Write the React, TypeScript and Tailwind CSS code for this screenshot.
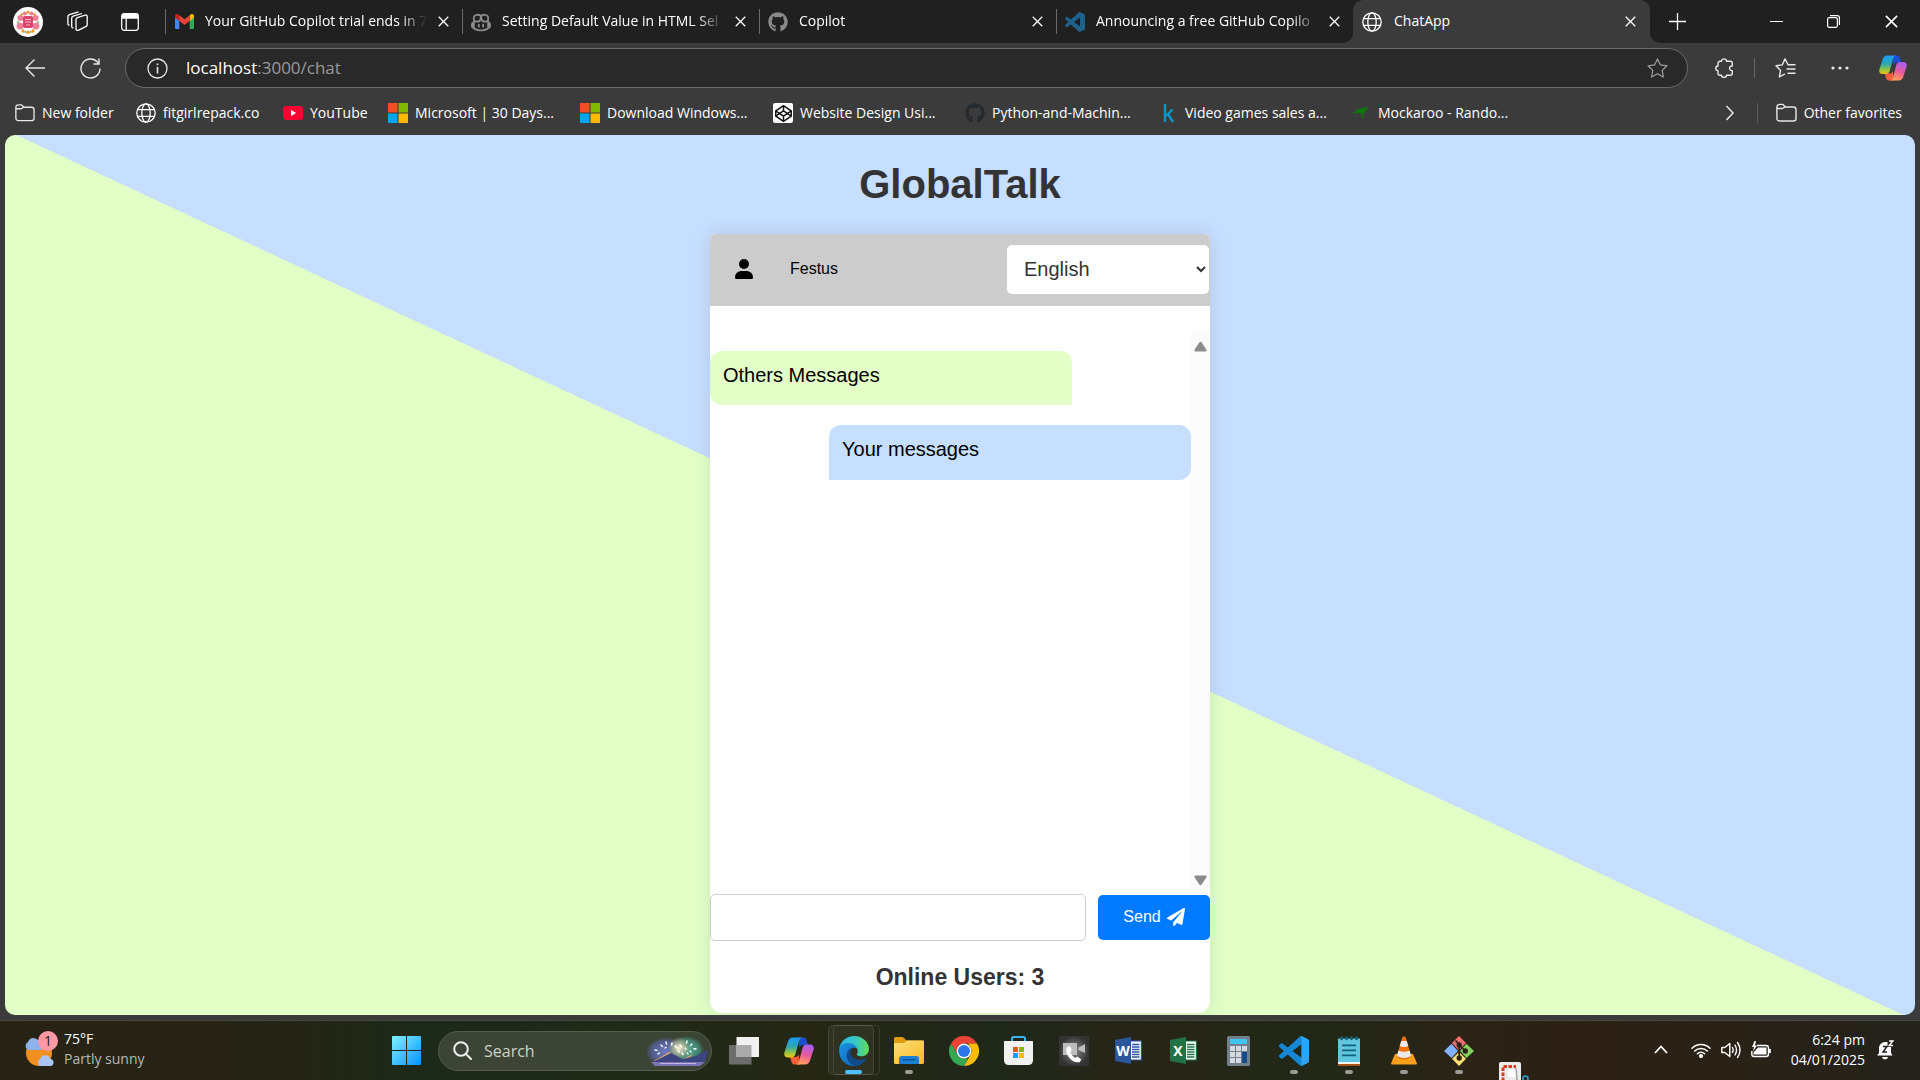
import type { ReactNode } from "react";
import { FaCodepen, FaGithub, FaPaperPlane } from "react-icons/fa";
import { VscCopilot } from "react-icons/vsc";

const VSCODE =
  "M23.15 2.587L18.21.21a1.494 1.494 0 0 0-1.705.29l-9.46 8.63-4.12-3.128a.999.999 0 0 0-1.276.057L.327 7.261A1 1 0 0 0 .326 8.74L3.899 12 .326 15.26a1 1 0 0 0 .001 1.479L1.65 17.94a.999.999 0 0 0 1.276.057l4.12-3.128 9.46 8.63a1.492 1.492 0 0 0 1.704.29l4.942-2.377A1.5 1.5 0 0 0 24 20.06V3.939a1.5 1.5 0 0 0-.85-1.352zm-5.146 14.861L10.826 12l7.178-5.448v10.896z";

/* ---------- shared icons ---------- */

const Globe = () => (
  <svg width="20" height="20" viewBox="0 0 20 20" fill="none" stroke="#fff" strokeWidth="1.3">
    <circle cx="10" cy="10" r="9.2" />
    <ellipse cx="10" cy="10" rx="4.2" ry="9.2" />
    <path d="M1.5 6.7h17M1.5 13.3h17" />
  </svg>
);

const Folder = () => (
  <svg width="21" height="20" viewBox="0 0 21 20" fill="none" stroke="#e8e8e8" strokeWidth="1.4">
    <path d="M.9 4A2.6 2.6 0 0 1 3.500 1.400h3.300l2.600 2.600h8a2.600 2.600 0 0 1 2.600 2.600v8.800a2.600 2.600 0 0 1-2.600 2.600H3.500A2.600 2.600 0 0 1 .9 15.400zM.9 5.500h5.200c.6 0 .9-.2 1.300-.5L9 4" />
  </svg>
);

const MsLogo = () => (
  <svg width="20" height="20" viewBox="0 0 20 20">
    <path fill="#f25022" d="M0 0h9.500v9.500H0z" />
    <path fill="#7fba00" d="M10.500 0H20v9.500h-9.500z" />
    <path fill="#00a4ef" d="M0 10.500h9.500V20H0z" />
    <path fill="#ffb900" d="M10.500 10.500H20V20h-9.500z" />
  </svg>
);

const Cross = ({ size = 11 }: { size?: number }) => (
  <svg width={size} height={size} viewBox="0 0 12 12" fill="none" stroke="#fff" strokeWidth="1.4">
    <path d="M.8.8l10.400 10.400M11.200.8L.8 11.200" />
  </svg>
);

const Copilot = ({ size, id }: { size: number; id: string }) => (
  <svg width={size} height={size} viewBox="0 0 30 30">
    <defs>
      <linearGradient id={`${id}a`} x1="0" y1="0" x2="0" y2="1">
        <stop offset="0" stopColor="#1a9df5" />
        <stop offset=".45" stopColor="#2aa6b8" />
        <stop offset=".75" stopColor="#8fc544" />
        <stop offset="1" stopColor="#f5c21b" />
      </linearGradient>
      <linearGradient id={`${id}b`} x1=".6" y1="0" x2=".3" y2="1">
        <stop offset="0" stopColor="#a95cf0" />
        <stop offset=".5" stopColor="#ec5a9c" />
        <stop offset="1" stopColor="#ffa552" />
      </linearGradient>
    </defs>
    <path fill="#1b4fd0" d="M14 1.500h5.500c2 0 2.700 1.500 3.200 3.200L23.800 9h-5c-2 0-3 1-3.500 3z" />
    <path fill="#f4603c" d="M16 28.500h-5.500c-2 0-2.700-1.500-3.200-3.200L6.200 21h5c2 0 3-1 3.500-3z" />
    <path fill={`url(#${id}a)`} d="M9 1.500h9c-2 .5-2.600 2-3.200 4L11.500 18c-.7 2.300-1.800 3.500-4 3.500H4C1 21.500-.3 19.300.4 16.500L4 5.500c.9-2.700 2.300-4 5-4z" />
    <path fill={`url(#${id}b)`} d="M21 28.500h-9c2-.5 2.600-2 3.200-4L18.500 12c.7-2.300 1.800-3.500 4-3.500H26c3 0 4.300 2.200 3.600 5L26 24.500c-.9 2.700-2.300 4-5 4z" />
  </svg>
);

/* ---------- browser: tabs ---------- */

const Gmail = () => (
  <svg width="19" height="15" viewBox="0 0 19 15">
    <path fill="#4285f4" d="M0 2.500l4.300 3.200V15H1.300A1.300 1.300 0 0 1 0 13.700z" />
    <path fill="#34a853" d="M19 2.500l-4.300 3.200V15h3a1.300 1.300 0 0 0 1.300-1.300z" />
    <path fill="#fbbc04" d="M14.700 1.200l1-.7C17.200-.6 19 .4 19 2v1.800l-4.300 3.300z" />
    <path fill="#c5221f" d="M4.300 1.200l-1-.7C1.800-.6 0 .4 0 2v1.800l4.300 3.300z" />
    <path fill="#ea4335" d="M4.300 1.200l5.200 4 5.200-4v5.900L9.500 11 4.300 7.100z" />
  </svg>
);

const tabs: { title: string; icon: ReactNode; active?: boolean }[] = [
  { title: "Your GitHub Copilot trial ends in 7", icon: <Gmail /> },
  { title: "Setting Default Value in HTML Sel", icon: <VscCopilot size={20} color="#8a8a8a" /> },
  { title: "Copilot", icon: <FaGithub size={20} color="#8a8a8a" /> },
  {
    title: "Announcing a free GitHub Copilo",
    icon: (
      <svg width="20" height="20" viewBox="0 0 24 24" fill="#1f618d">
        <path d={VSCODE} />
      </svg>
    ),
  },
  { title: "ChatApp", icon: <Globe />, active: true },
];

function TabStrip() {
  return (
    <div className="flex h-[43px] shrink-0 bg-[#202020]">
      <div className="flex w-[165px] shrink-0 items-center">
        <button aria-label="Profile" className="ml-[13px]">
          <svg width="30" height="30" viewBox="0 0 30 30">
            <circle cx="15" cy="15" r="15" fill="#fff" />
            <g fill="#ec7f98">
              <circle cx="7.500" cy="11" r="3" />
              <circle cx="22.500" cy="11" r="3" />
              <circle cx="7" cy="19" r="3.500" />
              <circle cx="23" cy="19" r="3.500" />
              <circle cx="12" cy="6.500" r="2" />
              <circle cx="18.500" cy="6.500" r="2" />
            </g>
            <g fill="#ef9a35">
              <circle cx="15" cy="5.200" r="1.600" />
              <circle cx="9" cy="7.300" r="1.300" />
              <circle cx="21.500" cy="7.300" r="1.300" />
              <circle cx="10" cy="24" r="1.700" />
              <circle cx="20" cy="24" r="1.700" />
              <circle cx="15" cy="25.300" r="1.700" />
            </g>
            <g fill="#7fae52">
              <circle cx="12.500" cy="25" r="1" />
              <circle cx="17.500" cy="25" r="1" />
              <circle cx="5" cy="15" r="1" />
              <circle cx="25" cy="15" r="1" />
            </g>
            <rect x="10" y="9" width="10" height="12" rx="2" fill="#d8436b" />
            <path d="M12 12.500h6M12 15h6M13 18h4" stroke="#f7b4c2" />
          </svg>
        </button>
        <button aria-label="Workspaces" className="ml-[24px]">
          <svg width="21" height="21" viewBox="0 0 21 21" fill="none" stroke="#fff" strokeWidth="1.300" strokeLinejoin="round">
            <path d="M9 8.500c0-1 .6-1.600 1.500-1.900l7.500-2.400c1.300-.4 2.200.3 2.200 1.500v8c0 1-.6 1.700-1.500 2l-7.500 3.600c-1.300.5-2.200-.2-2.200-1.400z" />
            <path d="M6.300 17c-1 0-1.600-.6-1.600-1.600V7.200c0-1 .6-1.700 1.500-2l8.600-2.700M2.600 14.200C1.500 14.200.9 13.500.9 12.500V5.700c0-1 .6-1.700 1.500-2L11.500.8" />
          </svg>
        </button>
        <button aria-label="Tab actions" className="ml-[33px]">
          <svg width="18" height="18" viewBox="0 0 18 18" fill="none" stroke="#fff" strokeWidth="1.300">
            <rect x=".7" y=".7" width="16.600" height="16.600" rx="2.500" />
            <path d="M1.500 1.500h15v3.500h-15z" fill="#fff" />
            <path d="M5.200 5v12" />
          </svg>
        </button>
      </div>
      <div className="flex min-w-0 flex-1" role="tablist">
        {tabs.map((t) => (
          <div
            key={t.title}
            className={
              t.active
                ? "relative flex max-w-[297px] flex-1 items-center rounded-t-[10px] bg-[#3b3b3b] pl-[9px] pr-[14px]"
                : "flex max-w-[297px] min-w-0 flex-1 items-center pr-[13px]"
            }
          >
            {t.active ? (
              <>
                <svg className="absolute bottom-0 -left-[10px]" width="10" height="10" viewBox="0 0 10 10">
                  <path d="M10 0v10H0A10 10 0 0 0 10 0z" fill="#3b3b3b" />
                </svg>
                <svg className="absolute -right-[10px] bottom-0" width="10" height="10" viewBox="0 0 10 10">
                  <path d="M0 0v10h10A10 10 0 0 1 0 0z" fill="#3b3b3b" />
                </svg>
              </>
            ) : (
              <span className="mr-2 h-[25px] w-px bg-[#6b6b6b]" />
            )}
            <span className="flex w-5 shrink-0 justify-center">{t.icon}</span>
            <button
              role="tab"
              aria-selected={!!t.active}
              className={
                t.active
                  ? "ml-3 min-w-0 flex-1 overflow-hidden pb-[2px] text-left whitespace-nowrap"
                  : "ml-[11px] min-w-0 flex-1 overflow-hidden mask-r-from-88% pb-[2px] text-left whitespace-nowrap"
              }
            >
              {t.title}
            </button>
            <button aria-label={`Close ${t.title}`} className="ml-[11px]">
              <Cross />
            </button>
          </div>
        ))}
        <button aria-label="New tab" className="ml-[19px]">
          <svg width="17" height="17" viewBox="0 0 17 17" stroke="#fff" strokeWidth="1.300">
            <path d="M8.500 0v17M0 8.500h17" />
          </svg>
        </button>
      </div>
      <div className="flex shrink-0">
        <button aria-label="Minimize" className="flex w-[57px] items-center justify-center">
          <span className="h-px w-[13px] bg-white" />
        </button>
        <button aria-label="Restore" className="flex w-[57px] items-center justify-center">
          <svg width="13" height="13" viewBox="0 0 13 13" fill="none" stroke="#fff" strokeWidth="1.200">
            <rect x=".6" y="2.600" width="9.800" height="9.800" rx="1.800" />
            <path d="M3 .6h7.400a2 2 0 0 1 2 2V10" />
          </svg>
        </button>
        <button aria-label="Close window" className="flex w-[58px] items-center justify-center">
          <Cross size={13} />
        </button>
      </div>
    </div>
  );
}

/* ---------- browser: address bar ---------- */

function AddressBar() {
  return (
    <div className="flex h-[50px] shrink-0 items-center pr-[13px]">
      <button aria-label="Back" className="ml-[25px]">
        <svg width="20" height="18" viewBox="0 0 20 18" fill="none" stroke="#e8e8e8" strokeWidth="1.400">
          <path d="M9.500.5L1 9l8.500 8.500M1 9h19" />
        </svg>
      </button>
      <button aria-label="Refresh" className="ml-[35px]">
        <svg width="21" height="21" viewBox="0 0 21 21" fill="none" stroke="#e8e8e8" strokeWidth="1.400">
          <path d="M20 10.500a9.500 9.500 0 1 1-2.500-6.400l1.200 1.400M19 .5v5.500h-5.500" />
        </svg>
      </button>
      <div className="ml-[24px] flex h-10 flex-1 items-center rounded-full border border-[#6a6a6a] bg-[#292929] pr-[19px] pl-[21px]">
        <button aria-label="Site information">
          <svg width="21" height="21" viewBox="0 0 21 21" fill="none" stroke="#e8e8e8" strokeWidth="1.300">
            <circle cx="10.500" cy="10.500" r="9.500" />
            <path d="M10.500 9v6.500M10.500 5.600v1.600" strokeWidth="1.600" />
          </svg>
        </button>
        <a href="#chat" className="ml-[18px] flex-1 text-[17px] text-[#9a9a9a]">
          <span className="text-white">localhost</span>:3000/chat
        </a>
        <button aria-label="Add to favorites">
          <svg width="21" height="20" viewBox="0 0 21 20" fill="none" stroke="#a0a0a0" strokeWidth="1.200" strokeLinejoin="round">
            <path d="M10.500.9l2.900 6 6.600.9-4.800 4.600 1.200 6.600-5.900-3.200L4.600 19l1.200-6.600L1 7.800l6.600-.9z" />
          </svg>
        </button>
      </div>
      <button aria-label="Extensions" className="ml-[27px]">
        <svg width="19" height="20" viewBox="0 0 19 20" fill="none" stroke="#e8e8e8" strokeWidth="1.400" strokeLinejoin="round">
          <path d="M6.500 3.300c0-3.300 5-3.300 5 0h3.800a2 2 0 0 1 2 2V8c-3.600-.4-3.600 5 0 4.600v2.700a2 2 0 0 1-2 2h-3.800c0 2.900-5 2.900-5 0H5a2 2 0 0 1-2-2v-2.700c-3-.1-3-4.500 0-4.600V5.300a2 2 0 0 1 2-2z" />
        </svg>
      </button>
      <span className="ml-[20px] h-5 w-px bg-[#666]" />
      <button aria-label="Favorites" className="ml-[20px]">
        <svg width="21" height="20" viewBox="0 0 21 20" fill="none" stroke="#e8e8e8" strokeWidth="1.400" strokeLinejoin="round" strokeLinecap="round">
          <path d="M13 6.500L10 .9l-2.700 6L1 7.800l4.600 4.600L4.400 19l5-2.800M13 6.800h7M12 11h8M13 15.200h7" />
        </svg>
      </button>
      <button aria-label="Settings and more" className="ml-[35px]">
        <svg width="18" height="4" viewBox="0 0 18 4" fill="#e8e8e8">
          <circle cx="2" cy="2" r="1.600" />
          <circle cx="9" cy="2" r="1.600" />
          <circle cx="16" cy="2" r="1.600" />
        </svg>
      </button>
      <button aria-label="Copilot" className="ml-[30px]">
        <Copilot size={28} id="bar" />
      </button>
    </div>
  );
}

/* ---------- browser: bookmarks ---------- */

const bookmarks: { label: string; width: string; icon: ReactNode }[] = [
  { label: "New folder", width: "w-[121px]", icon: <Folder /> },
  { label: "fitgirlrepack.co", width: "w-[147px]", icon: <Globe /> },
  {
    label: "YouTube",
    width: "w-[105px]",
    icon: (
      <svg width="20" height="14" viewBox="0 0 20 14">
        <rect width="20" height="14" rx="3.500" fill="#ff0033" />
        <path d="M8 4l5.200 3L8 10z" fill="#fff" />
      </svg>
    ),
  },
  { label: "Microsoft | 30 Days...", width: "w-[192px]", icon: <MsLogo /> },
  { label: "Download Windows...", width: "w-[193px]", icon: <MsLogo /> },
  {
    label: "Website Design Usi...",
    width: "w-[192px]",
    icon: (
      <span className="flex size-5 items-center justify-center rounded-[2px] bg-white">
        <FaCodepen size={17} color="#111" />
      </span>
    ),
  },
  { label: "Python-and-Machin...", width: "w-[193px]", icon: <FaGithub size={20} color="#24292e" /> },
  {
    label: "Video games sales a...",
    width: "w-[193px]",
    icon: (
      <svg width="20" height="20" viewBox="0 0 20 20" fill="none" stroke="#0d96c4" strokeWidth="2.400">
        <path d="M7 1v18M14.500 6.500L8 13M10 11l5 8" />
      </svg>
    ),
  },
  {
    label: "Mockaroo - Rando...",
    width: "w-[192px]",
    icon: (
      <svg width="20" height="14" viewBox="0 0 20 14" fill="#087a08">
        <path d="M1 6.500C4 7 5 4 8.500 2.700c2.200-.7 3.600-.4 5-.9L15 .6l.8.700 1.700 1-.3 1-2 .2c-.5 1.400-1 2.200-1.800 2.800l.6 1.700-1.200-.9-.8.200-.4 2 1.800 2.600h-1.800L10.300 9l.2-1.500c-1.500 0-2-.4-3-.9C5.500 7.700 3 7.800 1 6.500z" />
      </svg>
    ),
  },
];

function BookmarksBar() {
  return (
    <nav className="flex h-[42px] shrink-0 items-center pr-[18px] pb-[2px] pl-[15px]">
      {bookmarks.map((b) => (
        <a key={b.label} href="#bookmark" className={`flex items-center gap-[7px] whitespace-nowrap ${b.width}`}>
          <span className="flex w-[20px] shrink-0 justify-center">{b.icon}</span>
          {b.label}
        </a>
      ))}
      <button aria-label="More bookmarks" className="ml-auto">
        <svg width="10" height="16" viewBox="0 0 10 16" fill="none" stroke="#e8e8e8" strokeWidth="1.500">
          <path d="M1.500 1l6.500 7-6.500 7" />
        </svg>
      </button>
      <span className="ml-[22px] h-5 w-px bg-[#5c5c5c]" />
      <a href="#other" className="ml-[18px] flex items-center gap-[7px] whitespace-nowrap">
        <Folder />
        Other favorites
      </a>
    </nav>
  );
}

/* ---------- page: chat ---------- */

function ChatPage() {
  return (
    <main className="mx-[5px] flex min-h-0 flex-1 flex-col items-center overflow-hidden rounded-[10px] bg-[linear-gradient(25deg,#e1ffc7_50%,#c6deff_50%)] pb-[2px] font-['Liberation_Sans',Arial,sans-serif] text-black">
      <h1 className="my-[26px] text-[40px] leading-[47px] font-bold text-[#333]">GlobalTalk</h1>
      <section className="flex min-h-0 w-[500px] flex-1 flex-col overflow-hidden rounded-t-[6px] rounded-b-[12px] bg-white shadow-[0_0_20px_rgba(0,0,0,0.1)]">
        <header className="flex h-[72px] shrink-0 items-center bg-[#ccc] pr-px pb-[2px]">
          <svg className="ml-[25px]" width="18" height="20" viewBox="0 0 18 20">
            <circle cx="9" cy="5" r="5" />
            <path d="M0 18.500C0 14 3.500 12 7 12h4c3.500 0 7 2 7 6.500q0 1.500-1.500 1.500h-15Q0 20 0 18.500z" />
          </svg>
          <span className="ml-[37px] text-base">Festus</span>
          <select
            aria-label="Language"
            defaultValue="English"
            className="ml-auto h-[49px] w-[202px] rounded-[5px] bg-white px-[13px] text-xl text-[#333]"
          >
            <option>English</option>
            <option>French</option>
            <option>Spanish</option>
          </select>
        </header>
        <div className="mt-[25px] flex min-h-0 flex-1">
          <div className="flex flex-1 flex-col gap-5 pt-5 text-xl">
            <p className="h-[54px] w-[362px] rounded-[12px] rounded-br-none bg-[#e1ffc7] px-[13px] pt-[10px]">Others Messages</p>
            <p className="h-[55px] w-[362px] self-end rounded-[12px] rounded-bl-none bg-[#c6deff] px-[13px] pt-[10px]">
              Your messages
            </p>
          </div>
          <div className="flex w-[19px] flex-col items-center justify-between bg-[#fbfbfb] pt-[10px] pb-[8px]">
            <svg width="13" height="11" viewBox="0 0 13 11" fill="#8b8b8b">
              <path d="M5.300 1.500q1.200-1.500 2.400 0l4.600 7q.8 2-1 2H1.700q-1.800 0-1-2z" />
            </svg>
            <svg width="13" height="11" viewBox="0 0 13 11" fill="#8b8b8b">
              <path d="M5.300 9.500q1.200 1.500 2.400 0l4.600-7q.8-2-1-2H1.700q-1.800 0-1 2z" />
            </svg>
          </div>
        </div>
        <form className="flex shrink-0 items-center gap-3" onSubmit={(e) => e.preventDefault()}>
          <input
            aria-label="Message"
            className="h-[47px] min-w-0 flex-1 rounded-[5px] border border-[#ccc] bg-white px-[10px] text-base outline-none"
          />
          <button className="flex h-[45px] w-[112px] items-center justify-center gap-[6px] rounded-[5px] bg-[#007bff] pb-[2px] text-base text-white">
            Send
            <FaPaperPlane size={18} />
          </button>
        </form>
        <h2 className="mt-[23px] mb-[22px] shrink-0 text-center text-[23px] leading-[27px] font-bold text-[#333]">Online Users: 3</h2>
      </section>
    </main>
  );
}

/* ---------- taskbar ---------- */

const Edge = () => (
  <svg width="30" height="30" viewBox="0 0 30 30">
    <defs>
      <linearGradient id="eg1" x1="0" y1=".5" x2="1" y2=".5">
        <stop offset="0" stopColor="#2bb5ec" />
        <stop offset=".55" stopColor="#35c9c4" />
        <stop offset="1" stopColor="#62dd55" />
      </linearGradient>
      <linearGradient id="eg2" x1="0" y1="0" x2="1" y2="1">
        <stop offset="0" stopColor="#1c93e0" />
        <stop offset="1" stopColor="#0c5cb4" />
      </linearGradient>
    </defs>
    <path fill="url(#eg2)" d="M.2 13.500C1 9 5 6.500 9.500 6.500c5.500 0 9 3 9 6.500-3-2.500-8-1-8 4 0 5.500 6 8.500 12 7.500l4.500-1.500C24.500 27.300 20 30 15 30 6.500 30-.6 22.500.2 13.500z" />
    <path fill="#114a8b" d="M11.500 12.500c-3.500 2-4.500 6-3.500 9.500 1.200 4.500 5 7.500 9.500 7.800 4-.6 7.500-3 9.700-6.500.3-.6-.2-1-.8-.7-5.500 2.700-14.500 1.200-14.900-6.100 0-1.500.6-3 1.500-4z" />
    <path fill="url(#eg1)" d="M.2 13.500C1 5.500 7.500 0 15 0c9 0 15 6.500 15 13 0 4.500-3.500 7.300-7.500 7.300-3 0-4.700-1-4.700-1.900 0-.6.9-1.200.9-3.100 0-4.300-4-8.300-9.500-8.300C4.500 7 1.200 9.700.2 13.500z" />
  </svg>
);

const Explorer = () => (
  <svg width="30" height="27" viewBox="0 0 30 27">
    <defs>
      <linearGradient id="fe" x1="0" y1="0" x2="1" y2="1">
        <stop offset="0" stopColor="#ffe07a" />
        <stop offset="1" stopColor="#f7b924" />
      </linearGradient>
    </defs>
    <path fill="#e09a10" d="M0 1.500Q0 0 1.500 0H8q1 0 2 1l2.500 2.500H30V10H0z" />
    <path fill="url(#fe)" d="M0 6h10l3-2.500h15.500Q30 3.500 30 5v20.500q0 1.500-1.500 1.500h-27Q0 27 0 25.500z" />
    <path fill="#1a7fd6" d="M5 27v-5q0-3 3-3h14q3 0 3 3v5z" />
    <path stroke="#0b4d94" strokeWidth="1.300" d="M8.500 22.700h13" />
  </svg>
);

const Chrome = () => (
  <svg width="30" height="30" viewBox="0 0 30 30">
    <path fill="#ea4335" d="M2 7.500a15 15 0 0 1 26 0H15a7.500 7.500 0 0 0-6.500 3.750L8.500 18.750z" />
    <path fill="#fbbc05" d="M28 7.500A15 15 0 0 1 15 30l6.500-11.250a7.500 7.500 0 0 0 0-7.500L19 7.500z" />
    <path fill="#34a853" d="M15 30A15 15 0 0 1 2 7.500l6.500 11.250A7.500 7.500 0 0 0 15 22.500l4.300-.1z" />
    <circle cx="15" cy="15" r="7.400" fill="#fff" />
    <circle cx="15" cy="15" r="6" fill="#2f77e8" />
  </svg>
);

const Store = () => (
  <svg width="29" height="29" viewBox="0 0 29 29">
    <path d="M8 6V2.500Q8 1 9.500 1h10Q21 1 21 2.500V6" fill="none" stroke="#35b5ee" strokeWidth="2" />
    <path fill="#f1f1f1" d="M0 5.500Q0 5 .5 5h28q.5 0 .5.500V24q0 5-5 5H5q-5 0-5-5z" />
    <path fill="#f25022" d="M9 11h5v5H9z" />
    <path fill="#7fba00" d="M15 11h5v5h-5z" />
    <path fill="#00a4ef" d="M9 17h5v5H9z" />
    <path fill="#ffb900" d="M15 17h5v5h-5z" />
  </svg>
);

const PhoneLink = () => (
  <svg width="30" height="30" viewBox="0 0 30 30">
    <defs>
      <radialGradient id="ph">
        <stop offset="0" stopColor="#8a8a8a" />
        <stop offset="1" stopColor="#333" />
      </radialGradient>
    </defs>
    <path fill="url(#ph)" d="M0 0h30v30H0z" />
    <path fill="#bdbdbd" d="M4 7h14v12H4zM19.500 11.500L26 8v9l-6.500-3z" />
    <path fill="#fff" d="M7.500 11.500l3-1.500 2.500 4-1.700 1.800c.8 2.700 2.400 4.700 5 6.200l2-1.500 4 3-1.800 2.700C14 27.500 6 20 7.500 11.500z" />
  </svg>
);

const Office = ({ letter, front, lines }: { letter: string; front: string; lines: string }) => (
  <span className="relative block h-[27px] w-[27px]">
    <svg width="27" height="27" viewBox="0 0 27 27">
      <path fill="#fff" stroke={front} strokeWidth="1.200" d="M14 4h12.400v19H14z" />
      <path stroke={lines} strokeWidth="1.300" d="M17 7.500h7.500M17 10h7.500M17 12.500h7.500M17 15h7.500M17 17.500h7.500M17 20h7.500" />
      <path fill={front} d="M0 3l16-3v27L0 24z" />
    </svg>
    <span className="absolute inset-y-0 left-0 flex w-4 items-center justify-center text-sm font-bold text-white">{letter}</span>
  </span>
);

const Calculator = () => (
  <svg width="23" height="30" viewBox="0 0 23 30">
    <rect width="23" height="30" rx="1.500" fill="#73808c" />
    <path fill="#3ec5f2" d="M3 3h17v5H3z" />
    <path fill="#d3dae0" d="M3 10h5v5H3zM9 10h5v5H9zM15 10h5v5h-5zM3 16h5v5H3zM9 16h5v5H9zM3 22h5v5H3zM9 22h5v5H9z" />
    <path fill="#174a8c" d="M15 16h5v11h-5z" />
  </svg>
);

const VsCode = () => (
  <svg width="30" height="30" viewBox="0 0 24 24">
    <path d={VSCODE} fill="#1587d4" />
    <path fill="#2fa4f2" d="M18 0l5.150 2.587A1.500 1.500 0 0 1 24 3.940v16.120a1.500 1.500 0 0 1-.85 1.352L18 23.900z" />
  </svg>
);

const Notepad = () => (
  <svg width="22" height="30" viewBox="0 0 22 30">
    <path fill="#5fc6e0" d="M0 2.500h22V26H0z" />
    <path fill="#f4f4f4" d="M0 26h22v2H0z" />
    <path fill="#a8531c" d="M0 28h22v2H0z" />
    <path stroke="#13617c" strokeWidth="2.600" strokeLinecap="round" d="M3.500 1.500v1.500M8.500 1.500v1.500M13.500 1.500v1.500M18.500 1.500v1.500" />
    <path stroke="#13617c" strokeWidth="1.800" d="M4 9.300h14M4 14.300h14M4 19.300h14" />
  </svg>
);

const Vlc = () => (
  <svg width="26" height="29" viewBox="0 0 26 29">
    <path fill="#f9a01b" d="M4 18h18l4 9.500q0 1-1 1H1q-1 0-1-1z" />
    <path fill="#ee7208" d="M11.500.800Q13 0 14.500.8L20.500 21q-7.500 5-15 0z" />
    <path fill="#e9e9e9" d="M10.300 5h5.400l1.600 5q-4.300 2.200-8.600 0zM7.500 14.500q5.500 2.500 11 0l1.700 5.500q-7 4-14.400 0z" />
  </svg>
);

const GitBash = () => (
  <svg width="30" height="30" viewBox="0 0 30 30">
    <path fill="#f26d6f" d="M15 0l7 7-7 7.500L8 7z" />
    <path fill="#82b1ff" d="M7.500 7.700L14 15l-6.500 7L0 15z" />
    <path fill="#82d05e" d="M22.500 7.700L30 15l-7.500 7L16 15z" />
    <path fill="#ffe071" d="M15 16l7 6.700L15 30l-7-7.300z" />
    <g stroke="#2a2417" strokeWidth="1.700" fill="#2a2417">
      <path d="M11.500 4.500l3.700 4v14M15.200 9l6 6" fill="none" />
      <circle cx="15.200" cy="9" r="1.800" />
      <circle cx="15.200" cy="22" r="1.800" />
      <circle cx="21.300" cy="15" r="1.800" />
    </g>
  </svg>
);

const TaskView = () => (
  <svg width="30" height="28" viewBox="0 0 30 28">
    <path fill="#6d6d6d" d="M0 8h22.500v19.500H0z" />
    <path fill="#f1f1f1" d="M7.500 0H30v20H7.500z" />
    <path fill="#ababab" d="M7.500 8h15v12h-15z" />
  </svg>
);

const Snip = () => (
  <svg width="30" height="30" viewBox="0 0 30 30">
    <rect width="22" height="24" rx="2" fill="#ececec" />
    <path d="M4 19V4.500h13" fill="none" stroke="#d83b1e" strokeWidth="3" strokeDasharray="3.500 1.500" />
    <rect x="9" y="7" width="9" height="8" rx="2" fill="#fff" />
    <path d="M17 6l1 12 8 4" fill="none" stroke="#a5a5a5" strokeWidth="1.500" />
    <circle cx="26.500" cy="16.500" r="2.500" fill="none" stroke="#2a9fd6" strokeWidth="1.600" />
  </svg>
);

const apps: { name: string; icon: ReactNode; state?: "active" | "open" }[] = [
  { name: "Task view", icon: <TaskView /> },
  { name: "Copilot", icon: <Copilot size={30} id="task" /> },
  { name: "Edge", icon: <Edge />, state: "active" },
  { name: "File Explorer", icon: <Explorer />, state: "open" },
  { name: "Chrome", icon: <Chrome /> },
  { name: "Store", icon: <Store /> },
  { name: "Phone", icon: <PhoneLink /> },
  { name: "Word", icon: <Office letter="W" front="#2b579a" lines="#2b579a" /> },
  { name: "Excel", icon: <Office letter="X" front="#217346" lines="#217346" /> },
  { name: "Calculator", icon: <Calculator /> },
  { name: "VS Code", icon: <VsCode />, state: "open" },
  { name: "Notepad", icon: <Notepad />, state: "open" },
  { name: "VLC", icon: <Vlc />, state: "open" },
  { name: "Git Bash", icon: <GitBash />, state: "open" },
];

const SearchArt = () => (
  <svg width="62" height="30" viewBox="0 0 62 30">
    <defs>
      <radialGradient id="sa1">
        <stop offset="0" stopColor="#6f7bc4" />
        <stop offset=".7" stopColor="#56629d" stopOpacity=".85" />
        <stop offset="1" stopColor="#56629d" stopOpacity="0" />
      </radialGradient>
      <radialGradient id="sa2">
        <stop offset="0" stopColor="#5fae98" />
        <stop offset=".7" stopColor="#43907c" stopOpacity=".85" />
        <stop offset="1" stopColor="#43907c" stopOpacity="0" />
      </radialGradient>
      <radialGradient id="sa3">
        <stop offset="0" stopColor="#fff0d8" />
        <stop offset="1" stopColor="#f0b080" stopOpacity="0" />
      </radialGradient>
    </defs>
    <ellipse cx="20" cy="16" rx="20" ry="15" fill="url(#sa1)" />
    <ellipse cx="40" cy="14" rx="18" ry="14" fill="url(#sa2)" />
    <ellipse cx="33" cy="12" rx="11" ry="11" fill="url(#sa3)" />
    <path fill="#e9a66c" d="M8 25l15-9 6 3 8 4 10-5-6 8z" opacity=".85" />
    <path fill="#3b4680" d="M7 26l18-9 12 6 12-3 13-6-3 12z" />
    <path fill="#7a74b4" d="M5 26h54l-5 4H9z" />
    <path stroke="#c9b6e0" d="M14 27.500h36" />
    <path
      stroke="#fff"
      strokeWidth="1.400"
      strokeLinecap="round"
      d="M9 14l2 .4M12 18l1.500-1M15 9l1.500 1.500M20 6l.5 2M19 12l1-.6M26 7l-.4 2M29 10l2 2M32 14l1.500 2M36 17l1 1.500M34 9l1.500 2M41 5l-.5 2M46 8l-1.500 1.500M50 13l-2-.2M45 16l-1-1M39 12l1 1M42 18l-.5-1"
    />
  </svg>
);

function Taskbar() {
  return (
    <footer className="grid shrink-0 grid-cols-[1fr_auto_1fr] grid-rows-[59px] overflow-hidden border-t border-[#464640] bg-[linear-gradient(90deg,#282315_0%,#262416_14%,#1d2a19_22%,#1f2a19_32%,#262715_42%,#20281a_52%,#272517_60%,#212817_68%,#2a2417_76%,#2d2015_82%,#2a2217_90%,#23221b_100%)] text-[15px]">
      <button className="flex items-center gap-[9px] pb-[3px] pl-[24px] text-left text-sm">
        <span className="relative block h-[35px] w-[31px]">
          <svg width="31" height="35" viewBox="0 0 31 35">
            <circle cx="15" cy="21" r="13" fill="#f18f1f" />
            <path fill="#8fb2ee" d="M4 18a4.500 4.500 0 0 1 0-8 6 6 0 0 1 11.500 1 3.600 3.600 0 0 1 1 7z" />
            <path fill="#a9c5f5" d="M16 34a4 4 0 0 1 0-7 5.500 5.500 0 0 1 10.500 0A3.600 3.600 0 0 1 27 34z" />
          </svg>
          <span className="absolute -top-px -right-[3px] flex size-5 items-center justify-center rounded-full bg-[#fd98a5] text-[#222]">1</span>
        </span>
        <span className="leading-5">
          75°F
          <span className="block text-[#b9b8b2]">Partly sunny</span>
        </span>
      </button>
      <div className="flex h-[59px] items-center overflow-hidden">
        <button aria-label="Start" className="flex w-[55px] justify-center">
          <svg width="29" height="29" viewBox="0 0 29 29">
            <defs>
              <linearGradient id="win" gradientUnits="userSpaceOnUse" x1="0" y1="0" x2="29" y2="29">
                <stop offset="0" stopColor="#7ff0ff" />
                <stop offset="1" stopColor="#0a93ff" />
              </linearGradient>
            </defs>
            <path fill="url(#win)" d="M1 0h13v14H0V1q0-1 1-1zM15 0h13q1 0 1 1v13H15zM0 15h14v14H1q-1 0-1-1zM15 15h14v13q0 1-1 1H15z" />
          </svg>
        </button>
        <label className="mx-1 flex h-10 w-[274px] items-center rounded-full border border-[#555c4b] bg-[#3c4535] pr-[3px] pl-[14px]">
          <svg width="19" height="19" viewBox="0 0 19 19" fill="none" stroke="#eee" strokeWidth="2" strokeLinecap="round">
            <circle cx="8" cy="8" r="6.800" />
            <path d="M13 13l5 5" />
          </svg>
          <input
            type="search"
            aria-label="Search"
            placeholder="Search"
            className="ml-[12px] min-w-0 flex-1 bg-transparent text-base outline-none placeholder:text-[#cfd2c8]"
          />
          <SearchArt />
        </label>
        {apps.map((a) => (
          <button key={a.name} aria-label={a.name} className="relative flex h-full w-[55px] items-center justify-center">
            {a.state === "active" && (
              <>
                <span className="absolute top-1 left-[7px] h-[50px] w-[47px] rounded-[5px] border border-white/10" />
                <span className="absolute top-1 left-[2px] h-[50px] w-[46px] rounded-[5px] border border-white/10 bg-white/5" />
                <span className="absolute bottom-[6px] left-[19px] h-1 w-[17px] rounded-full bg-[#4cc2ff]" />
              </>
            )}
            {a.state === "open" && <span className="absolute bottom-[6px] h-1 w-2 rounded-full bg-[#9b9b93]" />}
            <span className="relative">{a.icon}</span>
          </button>
        ))}
        <button aria-label="Snipping Tool" className="flex h-full w-[55px] items-start justify-center pt-[41px]">
          <Snip />
        </button>
      </div>
      <div className="flex items-center justify-end pr-[26px] pb-[2px]">
        <button aria-label="Show hidden icons" className="mr-[23px]">
          <svg width="14" height="9" viewBox="0 0 14 9" fill="none" stroke="#fff" strokeWidth="1.800">
            <path d="M1 8l6-6.500L13 8" />
          </svg>
        </button>
        <button aria-label="Network, sound and battery" className="mr-[20px] flex items-center gap-[10px]">
          <svg width="20" height="16" viewBox="0 0 20 16" fill="none" stroke="#fff" strokeWidth="1.500" strokeLinecap="round">
            <path d="M1 6.300a12.500 12.500 0 0 1 18 0M3.700 9a9 9 0 0 1 12.600 0M6.400 11.700a5 5 0 0 1 7.200 0" />
            <circle cx="10" cy="14" r="1.300" fill="#fff" />
          </svg>
          <svg width="20" height="18" viewBox="0 0 20 18" fill="none" stroke="#fff" strokeWidth="1.400" strokeLinecap="round" strokeLinejoin="round">
            <path d="M.8 6.500v5h3l5 4V2.500l-5 4zM11.500 6.500q1.300 2.500 0 5M14 4q3 5 0 10M16.500 1.500q5 7.500 0 15" />
          </svg>
          <svg width="20" height="17" viewBox="0 0 20 17" fill="none" stroke="#fff" strokeWidth="1.400">
            <path d="M6 4.500h9q2.500 0 2.500 2.500v6q0 2.500-2.500 2.500H3Q.8 15.500.8 13v-3" />
            <path d="M7 6.500h8.500v7h-13v-2z" fill="#fff" stroke="none" />
            <path d="M18.800 8v4" strokeWidth="2" />
            <path d="M3.500 0L1 6h2L2 10.500 6 4.500H4L5 0z" fill="#fff" stroke="none" />
          </svg>
        </button>
        <button className="mr-[12px] text-right text-sm leading-5">
          6:24 pm
          <span className="block">04/01/2025</span>
        </button>
        <button aria-label="Notifications">
          <svg width="17" height="20" viewBox="0 0 17 20" fill="#fff">
            <path d="M2 13V8a6 6 0 0 1 6-6h2.500v5H14v6l1.500 2.500H0zM5 17h6q-.5 2.500-3 2.500T5 17z" />
            <path d="M12 1h4l-4 4.500h4" fill="none" stroke="#fff" strokeWidth="1.300" />
            <path d="M6 6.500h4L6 12h4" fill="none" stroke="#222" strokeWidth="1.500" />
          </svg>
        </button>
      </div>
    </footer>
  );
}

export default function App() {
  return (
    <div className="flex h-screen flex-col overflow-hidden bg-[#3b3b3b] font-['Open_Sans','Noto_Sans',sans-serif] text-sm text-white">
      <TabStrip />
      <AddressBar />
      <BookmarksBar />
      <ChatPage />
      <div className="h-[5px] shrink-0" />
      <Taskbar />
    </div>
  );
}
